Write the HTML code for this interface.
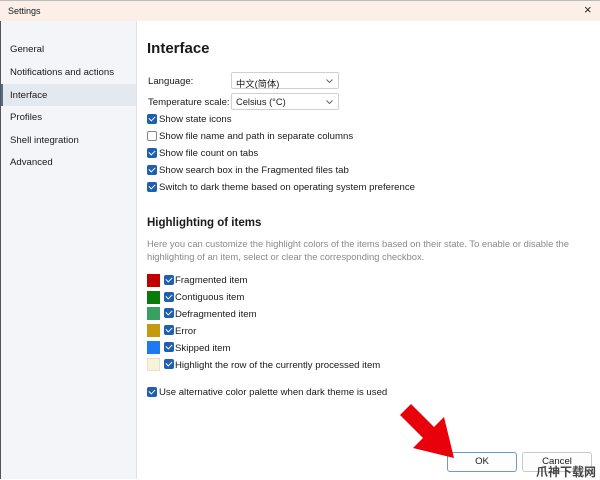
<!DOCTYPE html>
<html><head><meta charset="utf-8"><style>
*{margin:0;padding:0;box-sizing:border-box}
body{width:600px;height:479px;overflow:hidden;background:#fff;font-family:"Liberation Sans","Noto Sans CJK SC",sans-serif;font-size:9.6px;color:#1a1a1a;position:relative}
.a{position:absolute;white-space:nowrap}
.title{left:0;top:0;width:600px;height:21px;background:#fbefe7;border-top:1px solid #bbb}
.side{left:0;top:21px;width:137px;height:458px;background:#f3f5f8;border-right:1px solid #e2e2e2;border-left:1px solid #555}
.sel{left:1px;top:84px;width:135px;height:22px;background:#e4e8ef}
.bar{left:1px;top:84px;width:2px;height:22px;background:#5a6b85}
.cb{position:absolute;width:10px;height:10px;border-radius:2px;background:#1f5fb0}
.cb:after{content:"";position:absolute;left:3px;top:1px;width:3px;height:5px;border:solid #fff;border-width:0 1.3px 1.3px 0;transform:rotate(45deg)}
.cb.off{background:#fff;border:1px solid #888}
.cb.off:after{display:none}
.sw{position:absolute;width:13px;height:13px;left:147px}
.dd{position:absolute;left:231px;width:108px;height:17px;border:1px solid #d0d0d0;border-radius:2px;padding:3px 4px;font-size:9.3px}
.dd svg{position:absolute;right:5px;top:6px}
.btn{position:absolute;top:452px;width:70px;height:20px;border:1px solid #c8c8c8;border-radius:3px;text-align:center;line-height:18px;background:#fdfdfd}
</style></head><body>
<div class="a title"></div>
<div class="a" style="left:8px;top:6px;font-size:9px">Settings</div>
<div class="a" style="left:584px;top:2px;font-size:13px;color:#222">×</div>
<div class="a side"></div>
<div class="a sel"></div><div class="a bar"></div>
<div class="a" style="left:10px;top:44px">General</div>
<div class="a" style="left:10px;top:67px">Notifications and actions</div>
<div class="a" style="left:10px;top:90px">Interface</div>
<div class="a" style="left:10px;top:112px">Profiles</div>
<div class="a" style="left:10px;top:135px">Shell integration</div>
<div class="a" style="left:10px;top:157px">Advanced</div>

<div class="a" style="left:147px;top:40px;font-size:15px;font-weight:bold">Interface</div>
<div class="a" style="left:148px;top:76px">Language:</div>
<div class="a" style="left:148px;top:97px">Temperature scale:</div>
<div class="dd" style="top:72px">中文(简体)<svg width="7" height="4"><path d="M0.5 0.5L3.5 3.5L6.5 0.5" stroke="#666" fill="none"/></svg></div>
<div class="dd" style="top:93px">Celsius (°C)<svg width="7" height="4"><path d="M0.5 0.5L3.5 3.5L6.5 0.5" stroke="#666" fill="none"/></svg></div>
<div class="cb" style="left:147px;top:114px"></div><div class="a" style="left:159px;top:114px">Show state icons</div>
<div class="cb off" style="left:147px;top:131px"></div><div class="a" style="left:159px;top:131px">Show file name and path in separate columns</div>
<div class="cb" style="left:147px;top:148px"></div><div class="a" style="left:159px;top:148px">Show file count on tabs</div>
<div class="cb" style="left:147px;top:165px"></div><div class="a" style="left:159px;top:165px">Show search box in the Fragmented files tab</div>
<div class="cb" style="left:147px;top:182px"></div><div class="a" style="left:159px;top:182px">Switch to dark theme based on operating system preference</div>

<div class="a" style="left:147px;top:217px;font-size:11.5px;font-weight:bold">Highlighting of items</div>
<div class="a" style="left:147px;top:238px;color:#8a8a8a;line-height:12.5px;font-size:9.4px">Here you can customize the highlight colors of the items based on their state. To enable or disable the<br>highlighting of an item, select or clear the corresponding checkbox.</div>

<div class="sw" style="top:274px;background:#c00000"></div><div class="cb" style="left:164px;top:275px"></div><div class="a" style="left:175px;top:275px">Fragmented item</div>
<div class="sw" style="top:291px;background:#0a7a0a"></div><div class="cb" style="left:164px;top:292px"></div><div class="a" style="left:175px;top:292px">Contiguous item</div>
<div class="sw" style="top:307px;background:#3aa060"></div><div class="cb" style="left:164px;top:308px"></div><div class="a" style="left:175px;top:309px">Defragmented item</div>
<div class="sw" style="top:324px;background:#c49a10"></div><div class="cb" style="left:164px;top:325px"></div><div class="a" style="left:175px;top:326px">Error</div>
<div class="sw" style="top:341px;background:#1a7cf0"></div><div class="cb" style="left:164px;top:342px"></div><div class="a" style="left:175px;top:343px">Skipped item</div>
<div class="sw" style="top:358px;background:#f7f2dc;border:1px solid #e6e0c8"></div><div class="cb" style="left:164px;top:359px"></div><div class="a" style="left:175px;top:360px">Highlight the row of the currently processed item</div>
<div class="cb" style="left:147px;top:387px"></div><div class="a" style="left:159px;top:387px">Use alternative color palette when dark theme is used</div>

<div class="btn" style="left:447px;border-color:#6b9ad0">OK</div>
<div class="btn" style="left:522px">Cancel</div>
<svg class="a" style="left:0;top:0" width="600" height="479"><polygon points="454,458 444,417 434,427 411,404 400,415 423,438 413,448" fill="#e8000a"/></svg>
<div class="a" style="left:536px;top:463px;font-size:12px;color:#444;font-weight:bold">爪神下载网</div>
</body></html>
